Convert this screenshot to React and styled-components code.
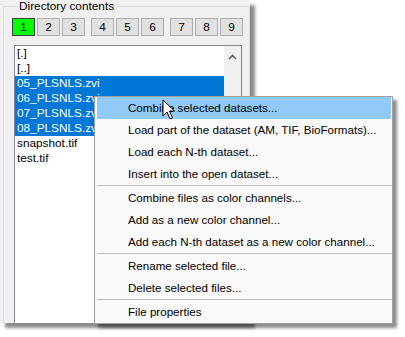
import styled, { createGlobalStyle } from "styled-components";

const Global = createGlobalStyle`
  body {
    margin: 0;
    background: #ffffff;
    font-family: "Liberation Sans", Arial, sans-serif;
    font-size: 11.8px;
    color: #000;
  }
`;

const Stage = styled.div`
  position: relative;
  width: 405px;
  height: 337px;
  overflow: hidden;
`;

const Panel = styled.div`
  width: 250px;
  height: 323px;
  background: #f0f0f0;
  box-shadow: 5px 5px 3px rgba(0, 0, 0, 0.45);
  overflow: hidden;
`;

const Group = styled.fieldset`
  margin: 0 1px 0 3px;
  padding: 0 6px 0 8px;
  width: 246px;
  box-sizing: border-box;
  border: 1px solid #dcdcdc;
  min-height: 400px;

  legend {
    margin-left: 5px;
    padding: 0 2px;
    line-height: 12px;
  }
`;

const Tabs = styled.div`
  display: flex;
  gap: 2px;
  margin-top: 6px;
`;

const Tab = styled.div`
  width: 23px;
  height: 18px;
  box-sizing: border-box;
  display: flex;
  align-items: center;
  justify-content: center;
  margin-left: ${(p) => (p.$split ? "4px" : "0")};
  background: ${(p) => (p.$active ? "#00ff00" : "#e1e1e1")};
  border: 1px solid ${(p) => (p.$active ? "#3c3c3c" : "#adadad")};
`;

const List = styled.div`
  display: flex;
  margin: 9px 0 0 2px;
  width: 228px;
  height: 300px;
  box-sizing: border-box;
  border: 1px solid #828790;
  background: #fff;
`;

const Items = styled.div`
  flex: 1;
`;

const Item = styled.div`
  height: 15px;
  line-height: 15px;
  padding-left: 2px;
  white-space: nowrap;
  overflow: hidden;
  background: ${(p) => (p.$selected ? "#0078d7" : "transparent")};
  color: ${(p) => (p.$selected ? "#fff" : "#000")};
`;

const Scroll = styled.div`
  width: 17px;
  background: #f0f0f0;
  display: flex;
  justify-content: center;
  padding-top: 8px;
  box-sizing: border-box;
`;

const Menu = styled.div`
  position: absolute;
  left: 94px;
  top: 96px;
  width: 299px;
  box-sizing: border-box;
  background: #f9f9f9;
  border: 1px solid #a0a0a0;
  box-shadow: 4px 4px 3px rgba(0, 0, 0, 0.45);
  font-size: 11.6px;
`;

const MenuItem = styled.div`
  height: 22px;
  line-height: 22px;
  margin: 0 1px 0 2px;
  padding-left: 31px;
  white-space: nowrap;
  background: ${(p) => (p.$hot ? "#91c9f7" : "transparent")};
`;

const Separator = styled.div`
  height: 2px;
  margin: 0 0 0 2px;
  border-top: 1px solid #bdbdbd;
  box-sizing: border-box;
`;

const Cursor = styled.svg`
  position: absolute;
  left: 162px;
  top: 99px;
`;

const files = [
  ["[.]", false],
  ["[..]", false],
  ["05_PLSNLS.zvi", true],
  ["06_PLSNLS.zvi", true],
  ["07_PLSNLS.zvi", true],
  ["08_PLSNLS.zvi", true],
  ["snapshot.tif", false],
  ["test.tif", false],
];

const menu = [
  ["Combine selected datasets...", true],
  ["Load part of the dataset (AM, TIF, BioFormats)..."],
  ["Load each N-th dataset..."],
  ["Insert into the open dataset..."],
  null,
  ["Combine files as color channels..."],
  ["Add as a new color channel..."],
  ["Add each N-th dataset as a new color channel..."],
  null,
  ["Rename selected file..."],
  ["Delete selected files..."],
  null,
  ["File properties"],
];

export default function App() {
  return (
    <Stage>
      <Global />
      <Panel>
        <Group>
          <legend>Directory contents</legend>
          <Tabs>
            {[1, 2, 3, 4, 5, 6, 7, 8, 9].map((n) => (
              <Tab key={n} $active={n === 1} $split={n === 4 || n === 7}>
                {n}
              </Tab>
            ))}
          </Tabs>
          <List>
            <Items>
              {files.map(([name, sel]) => (
                <Item key={name} $selected={sel}>
                  {name}
                </Item>
              ))}
            </Items>
            <Scroll>
              <svg width="9" height="6" viewBox="0 0 9 6">
                <polyline points="1,5 4.5,1.5 8,5" fill="none" stroke="#606060" strokeWidth="1.6" />
              </svg>
            </Scroll>
          </List>
        </Group>
      </Panel>
      <Menu>
        {menu.map((m, i) =>
          m ? (
            <MenuItem key={i} $hot={m[1]}>
              {m[0]}
            </MenuItem>
          ) : (
            <Separator key={i} />
          )
        )}
      </Menu>
      <Cursor width="14" height="22" viewBox="0 0 14 22">
        <path
          d="M1 1 L1 17 L5 13 L8 20 L10.5 19 L7.5 12 L12.5 12 Z"
          fill="#fff"
          stroke="#000"
          strokeWidth="1"
          strokeLinejoin="miter"
        />
      </Cursor>
    </Stage>
  );
}
